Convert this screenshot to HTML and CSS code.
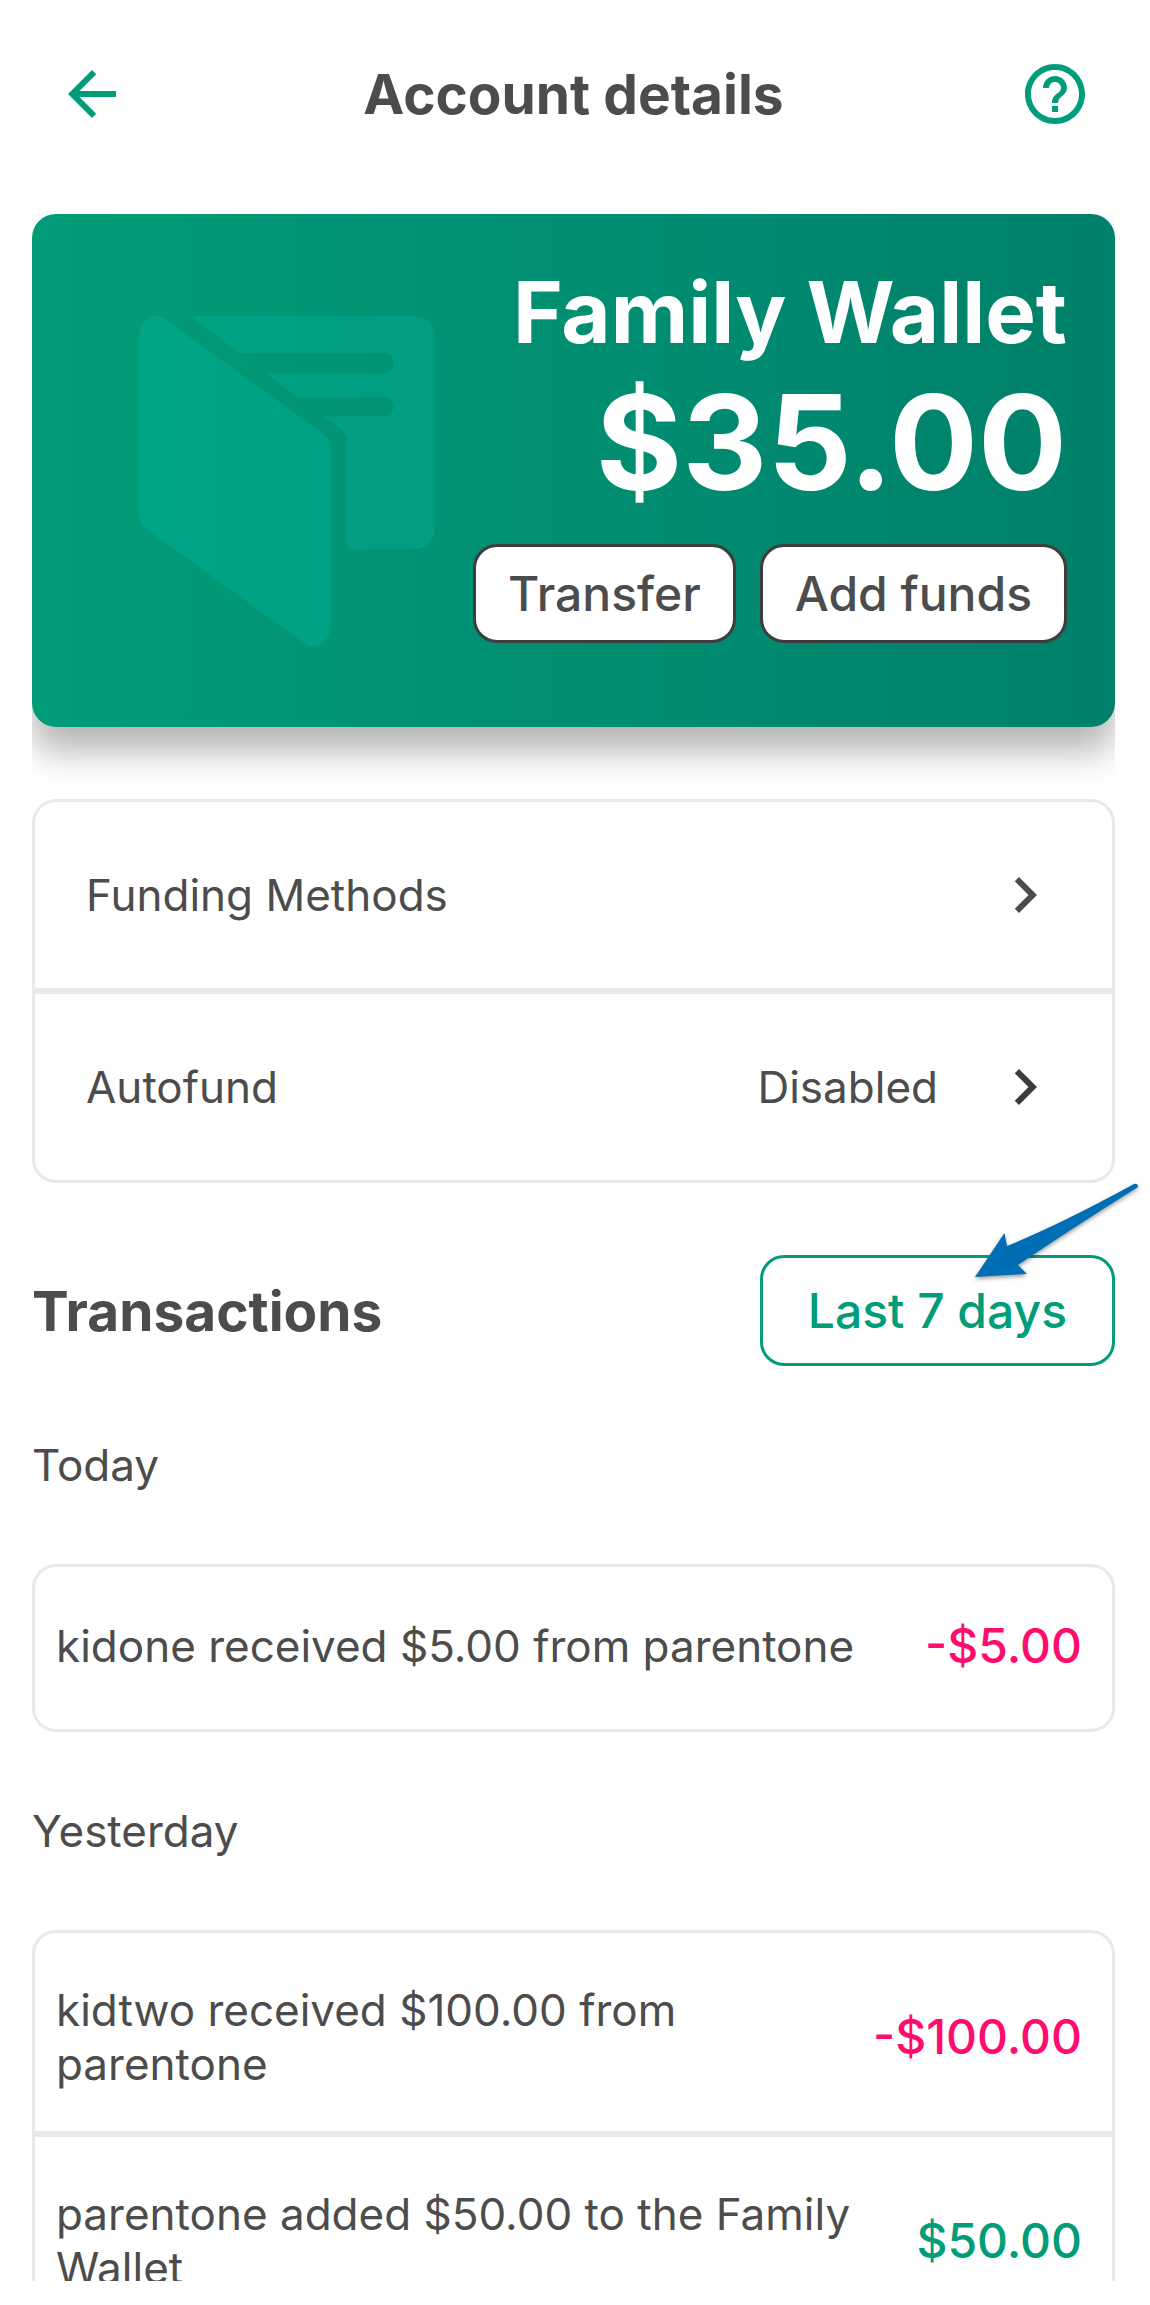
FILE: index.html
```html
<!DOCTYPE html>
<html lang="en">
<head>
  <meta charset="utf-8">
  <meta name="viewport" content="width=device-width, initial-scale=1">
  <title>Account details</title>
  <link rel="stylesheet" href="styles.css">
</head>
<body>
  <main class="screen">
    <header class="topbar">
      <button class="icon-button" type="button" aria-label="Back">
        <svg class="icon" viewBox="0 0 24 24" aria-hidden="true"><path d="M20 11H7.83l5.59-5.59L12 4l-8 8 8 8 1.41-1.41L7.83 13H20v-2z"/></svg>
      </button>
      <h1 class="topbar-title">Account details</h1>
      <button class="icon-button" type="button" aria-label="Help">
        <svg class="icon" viewBox="0 0 24 24" aria-hidden="true"><path d="M11 18h2v-2h-2v2zm1-16C6.48 2 2 6.48 2 12s4.480 10 10 10 10-4.480 10-10S17.520 2 12 2zm0 18c-4.410 0-8-3.590-8-8s3.590-8 8-8 8 3.590 8 8-3.590 8-8 8zm0-14c-2.210 0-4 1.790-4 4h2c0-1.100.9-2 2-2s2 .9 2 2c0 2-3 1.750-3 5h2c0-2.250 3-2.500 3-5 0-2.210-1.790-4-4-4z"/></svg>
      </button>
    </header>

    <section class="wallet">
      <svg class="wallet-logo" viewBox="0 0 296 331" aria-hidden="true">
        <path class="logo-front" d="M0 22C0 9 8 0 19.800 0c2.500 0 4.200 1.600 5.900 3l154.700 111.800c7.400 5.400 11.400 10 11.400 17.200v176.800c0 13-8 21.800-19.400 21.800-2.600 0-4.200-1-5.900-2.600L8 213.200c-5.500-3.900-8-7.200-8-13z"/>
        <path class="logo-back" d="M52 0h223.800c12 0 19.800 8.700 19.800 21.800v190.600c0 12-8 20.600-19.800 20.600h-67.500V125.100c0-6-5-11.500-11.400-16.100l-12.800-8.700H245a9.800 9.800 0 0 0 0-19.600h-87.300L126.100 57H245a9.950 9.950 0 0 0 0-19.900H101.600c-1.600 0-2.600-.7-3.800-1.600z"/>
      </svg>
      <div class="wallet-body">
        <h2 class="wallet-name">Family Wallet</h2>
        <p class="wallet-balance">$35.00</p>
        <div class="wallet-actions">
          <button class="button" type="button">Transfer</button>
          <button class="button" type="button">Add funds</button>
        </div>
      </div>
    </section>

    <nav class="group settings">
      <a class="row setting" href="#funding-methods">
        <span>Funding Methods</span>
        <svg class="icon chevron" viewBox="0 0 24 24" aria-hidden="true"><path d="M10 6L8.590 7.410 13.170 12l-4.580 4.590L10 18l6-6z"/></svg>
      </a>
      <a class="row setting" href="#autofund">
        <span>Autofund</span>
        <span class="setting-value">Disabled</span>
        <svg class="icon chevron" viewBox="0 0 24 24" aria-hidden="true"><path d="M10 6L8.590 7.410 13.170 12l-4.580 4.590L10 18l6-6z"/></svg>
      </a>
    </nav>

    <section>
      <div class="section-head">
        <h2 class="section-title">Transactions</h2>
        <div class="filter">
          <button class="button filter-button" type="button">Last 7 days</button>
          <svg class="pointer" viewBox="0 0 170 100" aria-hidden="true"><path d="M0 94L29.500 50l2.500 13Q86 41 159 1q4-1 4 3Q96 46 43 82l9 9z"/></svg>
        </div>
      </div>

      <h3 class="day">Today</h3>
      <ul class="group">
        <li class="row entry entry-single">
          <span class="entry-text">kidone received $5.00 from parentone</span>
          <span class="amount debit">-$5.00</span>
        </li>
      </ul>

      <h3 class="day">Yesterday</h3>
      <ul class="group">
        <li class="row entry">
          <span class="entry-text">kidtwo received $100.00 from parentone</span>
          <span class="amount debit">-$100.00</span>
        </li>
        <li class="row entry">
          <span class="entry-text">parentone added $50.00 to the Family Wallet</span>
          <span class="amount credit">$50.00</span>
        </li>
      </ul>
    </section>
  </main>
</body>
</html>
```
FILE: styles.css
```css
:root {
  --green: #009d78;
  --pink: #ff0d6e;
  --text: #4c4c4c;
  --line: #e9e9e9;
  --radius: 24px;
}

* {
  box-sizing: border-box;
}

body {
  margin: 0;
  background: #fff;
  color: var(--text);
  font-family: Inter, "Liberation Sans", sans-serif;
  font-size: 44px;
  line-height: 54px;
}

h1, h2, h3, p, ul {
  margin: 0;
  padding: 0;
}

.screen {
  height: calc(100vh - 24px);
  overflow: hidden;
  padding: 0 35px 0 32px;
}

.icon {
  display: block;
  width: 72px;
  height: 72px;
  fill: currentColor;
}

.icon-button {
  padding: 0;
  border: 0;
  background: none;
  color: var(--green);
}

.topbar {
  display: grid;
  grid-template-columns: 72px 1fr 72px;
  align-items: center;
  padding: 58px 24px 84px;
}

.topbar-title,
.section-title {
  font-size: 55px;
  line-height: 72px;
  font-weight: 700;
}

.topbar-title {
  text-align: center;
}

/* Wallet card: its shadow shows below the card only. */
.wallet {
  display: flex;
  justify-content: space-between;
  align-items: flex-start;
  padding: 48px 48px 80px 107px;
  border-radius: var(--radius);
  background: linear-gradient(90deg, #009d78, #00806a);
  box-shadow: 0 24px 36px rgba(0, 0, 0, 0.3);
  clip-path: inset(0 0 -72px 0);
  color: #fff;
}

.wallet-logo {
  flex: none;
  width: 296px;
  margin-top: 54px;
}

.logo-front {
  fill: rgba(0, 180, 160, 0.4);
}

.logo-back {
  fill: rgba(0, 180, 160, 0.35);
}

.wallet-body {
  display: flex;
  flex-direction: column;
  align-items: flex-end;
}

.wallet-name {
  font-size: 85px;
  line-height: 102px;
  font-weight: 700;
}

.wallet-balance {
  font-size: 132px;
  line-height: 156px;
  font-weight: 700;
}

.wallet-actions {
  display: flex;
  gap: 24px;
  margin-top: 24px;
}

.button {
  padding: 20px 32px;
  border: 3px solid #3f3c3d;
  border-radius: var(--radius);
  background: #fff;
  color: var(--text);
  font-family: inherit;
  font-size: 48px;
  line-height: 53px;
  font-weight: 500;
  white-space: nowrap;
}

/* Outlined rows joined into a rounded group */
.group {
  list-style: none;
}

.settings {
  margin-top: 72px;
}

.row {
  display: flex;
  align-items: center;
  border: 3px solid var(--line);
}

.row:first-child {
  border-top-left-radius: var(--radius);
  border-top-right-radius: var(--radius);
}

.row:last-child {
  border-bottom-left-radius: var(--radius);
  border-bottom-right-radius: var(--radius);
}

.setting {
  gap: 51px;
  padding: 57px 51px;
  color: inherit;
  text-decoration: none;
}

.setting .chevron {
  margin-left: auto;
}

.setting-value {
  margin-left: auto;
}

.setting-value + .chevron {
  margin-left: 0;
  color: #3c3c3c;
}

.section-head {
  display: flex;
  justify-content: space-between;
  align-items: center;
  padding: 72px 0 45px;
}

.filter {
  position: relative;
}

.filter-button {
  padding: 26px 45px;
  border-color: var(--green);
  color: var(--green);
}

.pointer {
  position: absolute;
  top: -72px;
  right: -30px;
  width: 170px;
  height: 100px;
  fill: #006eb4;
  filter: drop-shadow(0 2px 2px rgba(0, 0, 0, 0.4));
}

.day {
  padding: 27px 0 72px;
  font-size: 44px;
  line-height: 54px;
  font-weight: 400;
}

.group + .day {
  padding-top: 72px;
}

.entry {
  justify-content: space-between;
  gap: 48px;
  padding: 50px 30px 40px 21px;
}

.entry-single {
  padding-top: 52px;
  padding-bottom: 56px;
}

.amount {
  font-size: 48px;
  font-weight: 500;
  white-space: nowrap;
}

.debit {
  color: var(--pink);
}

.credit {
  color: var(--green);
}
```
